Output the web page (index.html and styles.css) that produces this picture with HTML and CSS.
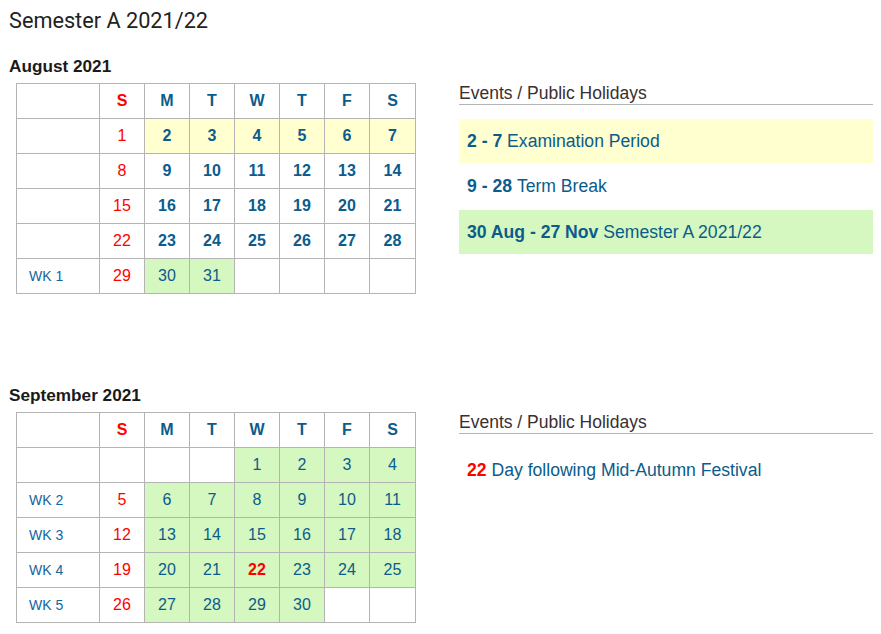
FILE: index.html
```html
<!DOCTYPE html>
<html lang="en">
<head>
<meta charset="utf-8">
<title>Semester A 2021/22</title>
<link rel="stylesheet" href="styles.css">
</head>
<body>
<div class="page">
  <h1 class="title">Semester A 2021/22</h1>

  <section class="month">
    <h2 class="month-title">August 2021</h2>
    <div class="month-body">
      <table class="cal">
        <colgroup><col class="c-wk"><col><col><col><col><col><col><col class="c-last"></colgroup>
        <tr class="head"><td></td><td class="sun">S</td><td>M</td><td>T</td><td>W</td><td>T</td><td>F</td><td>S</td></tr>
        <tr><td class="wk"></td><td class="sun">1</td><td class="exam b">2</td><td class="exam b">3</td><td class="exam b">4</td><td class="exam b">5</td><td class="exam b">6</td><td class="exam b">7</td></tr>
        <tr><td class="wk"></td><td class="sun">8</td><td class="b">9</td><td class="b">10</td><td class="b">11</td><td class="b">12</td><td class="b">13</td><td class="b">14</td></tr>
        <tr><td class="wk"></td><td class="sun">15</td><td class="b">16</td><td class="b">17</td><td class="b">18</td><td class="b">19</td><td class="b">20</td><td class="b">21</td></tr>
        <tr><td class="wk"></td><td class="sun">22</td><td class="b">23</td><td class="b">24</td><td class="b">25</td><td class="b">26</td><td class="b">27</td><td class="b">28</td></tr>
        <tr><td class="wk">WK 1</td><td class="sun">29</td><td class="term">30</td><td class="term">31</td><td></td><td></td><td></td><td></td></tr>
      </table>
      <div class="events">
        <h3 class="events-title">Events / Public Holidays</h3>
        <ul class="event-list">
          <li class="event exam"><b>2 - 7</b>&nbsp;Examination Period</li>
          <li class="event"><b>9 - 28</b>&nbsp;Term Break</li>
          <li class="event term"><b>30 Aug - 27 Nov</b>&nbsp;Semester A 2021/22</li>
        </ul>
      </div>
    </div>
  </section>

  <section class="month">
    <h2 class="month-title">September 2021</h2>
    <div class="month-body">
      <table class="cal">
        <colgroup><col class="c-wk"><col><col><col><col><col><col><col class="c-last"></colgroup>
        <tr class="head"><td></td><td class="sun">S</td><td>M</td><td>T</td><td>W</td><td>T</td><td>F</td><td>S</td></tr>
        <tr><td class="wk"></td><td class="sun"></td><td></td><td></td><td class="term">1</td><td class="term">2</td><td class="term">3</td><td class="term">4</td></tr>
        <tr><td class="wk">WK 2</td><td class="sun">5</td><td class="term">6</td><td class="term">7</td><td class="term">8</td><td class="term">9</td><td class="term">10</td><td class="term">11</td></tr>
        <tr><td class="wk">WK 3</td><td class="sun">12</td><td class="term">13</td><td class="term">14</td><td class="term">15</td><td class="term">16</td><td class="term">17</td><td class="term">18</td></tr>
        <tr><td class="wk">WK 4</td><td class="sun">19</td><td class="term">20</td><td class="term">21</td><td class="term hol">22</td><td class="term">23</td><td class="term">24</td><td class="term">25</td></tr>
        <tr><td class="wk">WK 5</td><td class="sun">26</td><td class="term">27</td><td class="term">28</td><td class="term">29</td><td class="term">30</td><td></td><td></td></tr>
      </table>
      <div class="events">
        <h3 class="events-title">Events / Public Holidays</h3>
        <ul class="event-list">
          <li class="event"><b class="red">22</b>&nbsp;Day following Mid-Autumn Festival</li>
        </ul>
      </div>
    </div>
  </section>
</div>
</body>
</html>
```
FILE: styles.css
```css
html, body {
  background: #fff;
}
body {
  margin: 8px;
  font-family: "Liberation Sans", Arial, sans-serif;
  color: #0b5c8c;
}
.title {
  margin: 0;
  font-family: Roboto, "Liberation Sans", sans-serif;
  font-weight: 400;
  font-size: 21.7px;
  line-height: 26px;
  color: #222;
  padding-left: 1px;
}
.month {
  margin-top: 22px;
}
.month + .month {
  margin-top: 91px;
}
.month-title {
  margin: 0;
  font-size: 17.2px;
  line-height: 20px;
  font-weight: 700;
  color: #1a1a1a;
  padding-left: 1px;
}
.month-body {
  display: grid;
  grid-template-columns: 400px 420px;
  column-gap: 43px;
  align-items: start;
  margin-top: 7px;
  padding-left: 8px;
  margin-right: -8px;
}
.cal {
  border-collapse: collapse;
  table-layout: fixed;
  width: 400px;
  font-size: 16px;
}
.cal col { width: 45px; }
.cal col.c-wk { width: 83px; }
.cal col.c-last { width: 46px; }
.cal td {
  border: 1px solid #b4b4b4;
  height: 34px;
  padding: 0;
  text-align: center;
  vertical-align: middle;
  color: #0b5c8c;
}
.cal .head td {
  font-weight: 700;
}
.cal td.sun {
  color: #ff0000;
}
.cal td.b {
  font-weight: 700;
}
.cal td.wk {
  text-align: left;
  padding-left: 12px;
  font-size: 14px;
  color: #1565a0;
}
.cal td.exam {
  background: #ffffcf;
}
.cal td.term {
  background: #d5f7c0;
}
.cal td.hol {
  color: #ff0000;
  font-weight: 700;
}
.events {
  width: 417px;
}
.events-title {
  margin: 0;
  font-size: 17.5px;
  line-height: 21px;
  font-weight: 400;
  color: #3a2f2f;
  border-bottom: 1px solid #b4b4b4;
}
.event-list {
  list-style: none;
  margin: 14px 0 0;
  padding: 0;
  display: flex;
  flex-direction: column;
  gap: 1.5px;
}
.event {
  height: 44px;
  display: flex;
  align-items: center;
  padding: 0 8px;
  font-size: 17.6px;
  color: #0b5c8c;
  white-space: nowrap;
}
.event.exam {
  background: #ffffcf;
}
.event.term {
  background: #d5f7c0;
}
.red {
  color: #ff0000;
}
```
